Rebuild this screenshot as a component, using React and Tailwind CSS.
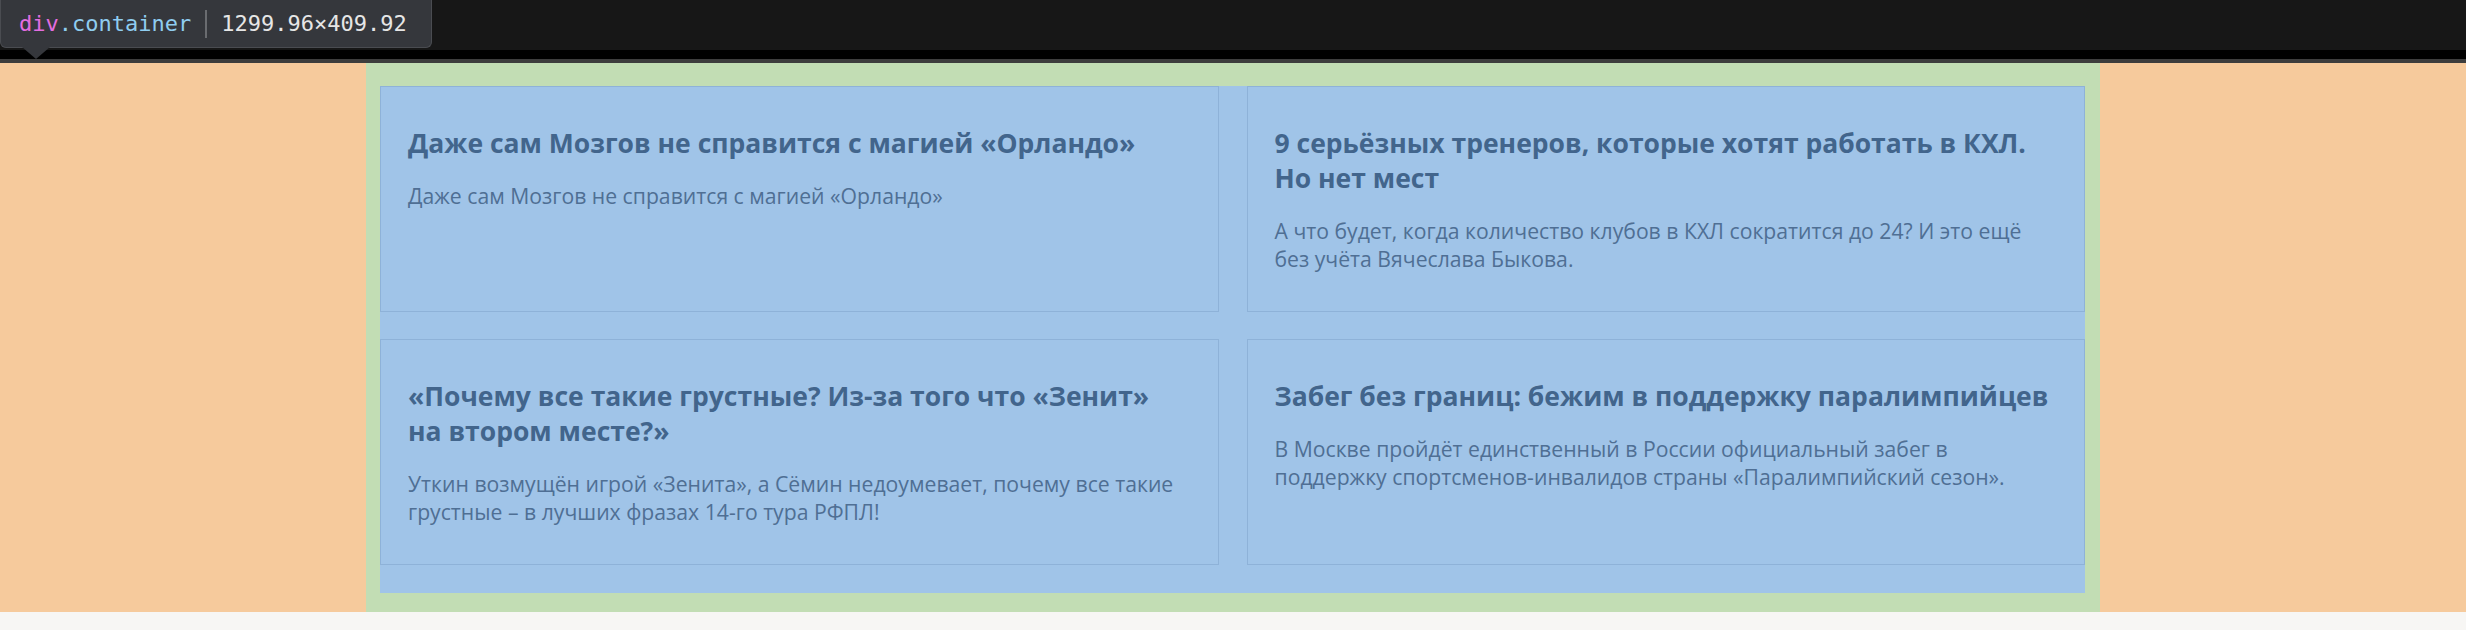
const cards = [
  {
    title: "Даже сам Мозгов не справится с магией «Орландо»",
    text: "Даже сам Мозгов не справится с магией «Орландо»",
  },
  {
    title: "9 серьёзных тренеров, которые хотят работать в КХЛ. Но нет мест",
    text: "А что будет, когда количество клубов в КХЛ сократится до 24? И это ещё без учёта Вячеслава Быкова.",
  },
  {
    title: "«Почему все такие грустные? Из-за того что «Зенит» на втором месте?»",
    text: "Уткин возмущён игрой «Зенита», а Сёмин недоумевает, почему все такие грустные – в лучших фразах 14-го тура РФПЛ!",
  },
  {
    title: "Забег без границ: бежим в поддержку паралимпийцев",
    text: "В Москве пройдёт единственный в России официальный забег в поддержку спортсменов-инвалидов страны «Паралимпийский сезон».",
  },
];

function Card({ title, text }) {
  return (
    <div className="border border-[#8eb2d8] pl-[27px] pr-[33px] pt-[39px] pb-[38px]">
      <h3 className="text-[26.5px] leading-[35px] font-bold text-[#42658c]">{title}</h3>
      <p className="mt-[21px] text-[21.2px] leading-[28px] text-[#4f6f94]">{text}</p>
    </div>
  );
}

export default function App() {
  return (
    <div className="w-[2466px] h-[630px] bg-[#f7f6f4] font-['Open_Sans',sans-serif]">
      <div className="relative h-[63px]">
        <div className="h-[50px] bg-[#171717]" />
        <div className="h-[9px] bg-black" />
        <div className="h-[4px] bg-[#3d3d3d]" />
        <div className="absolute left-0 top-0 w-[432px] h-[48px] rounded-b-[6px] bg-[#35373c] border border-t-0 border-[#4a4c51] flex items-center pl-[18px] font-['DejaVu_Sans_Mono',monospace] text-[22px]">
          <span className="text-[#e36de0]">div</span>
          <span className="text-[#8fcdf0]">.container</span>
          <span className="mx-[14px] w-[2px] h-[28px] bg-[#6a6c70]" />
          <span className="text-[#e6e6e6]">1299.96×409.92</span>
        </div>
        <div className="absolute left-[22px] top-[47px] w-0 h-0 border-l-[14px] border-r-[14px] border-t-[12px] border-l-transparent border-r-transparent border-t-[#35373c]" />
      </div>
      <div className="bg-[#f6ca9c]">
        <div className="mx-auto w-[1734px] bg-[#c2ddb4] pt-[23px] pb-[19px] pl-[14px] pr-[15px]">
          <div className="bg-[#a0c4e8] grid grid-cols-2 gap-x-[28px] gap-y-[27px] pb-[28px]">
            {cards.map((c, i) => (
              <Card key={i} title={c.title} text={c.text} />
            ))}
          </div>
        </div>
      </div>
    </div>
  );
}
